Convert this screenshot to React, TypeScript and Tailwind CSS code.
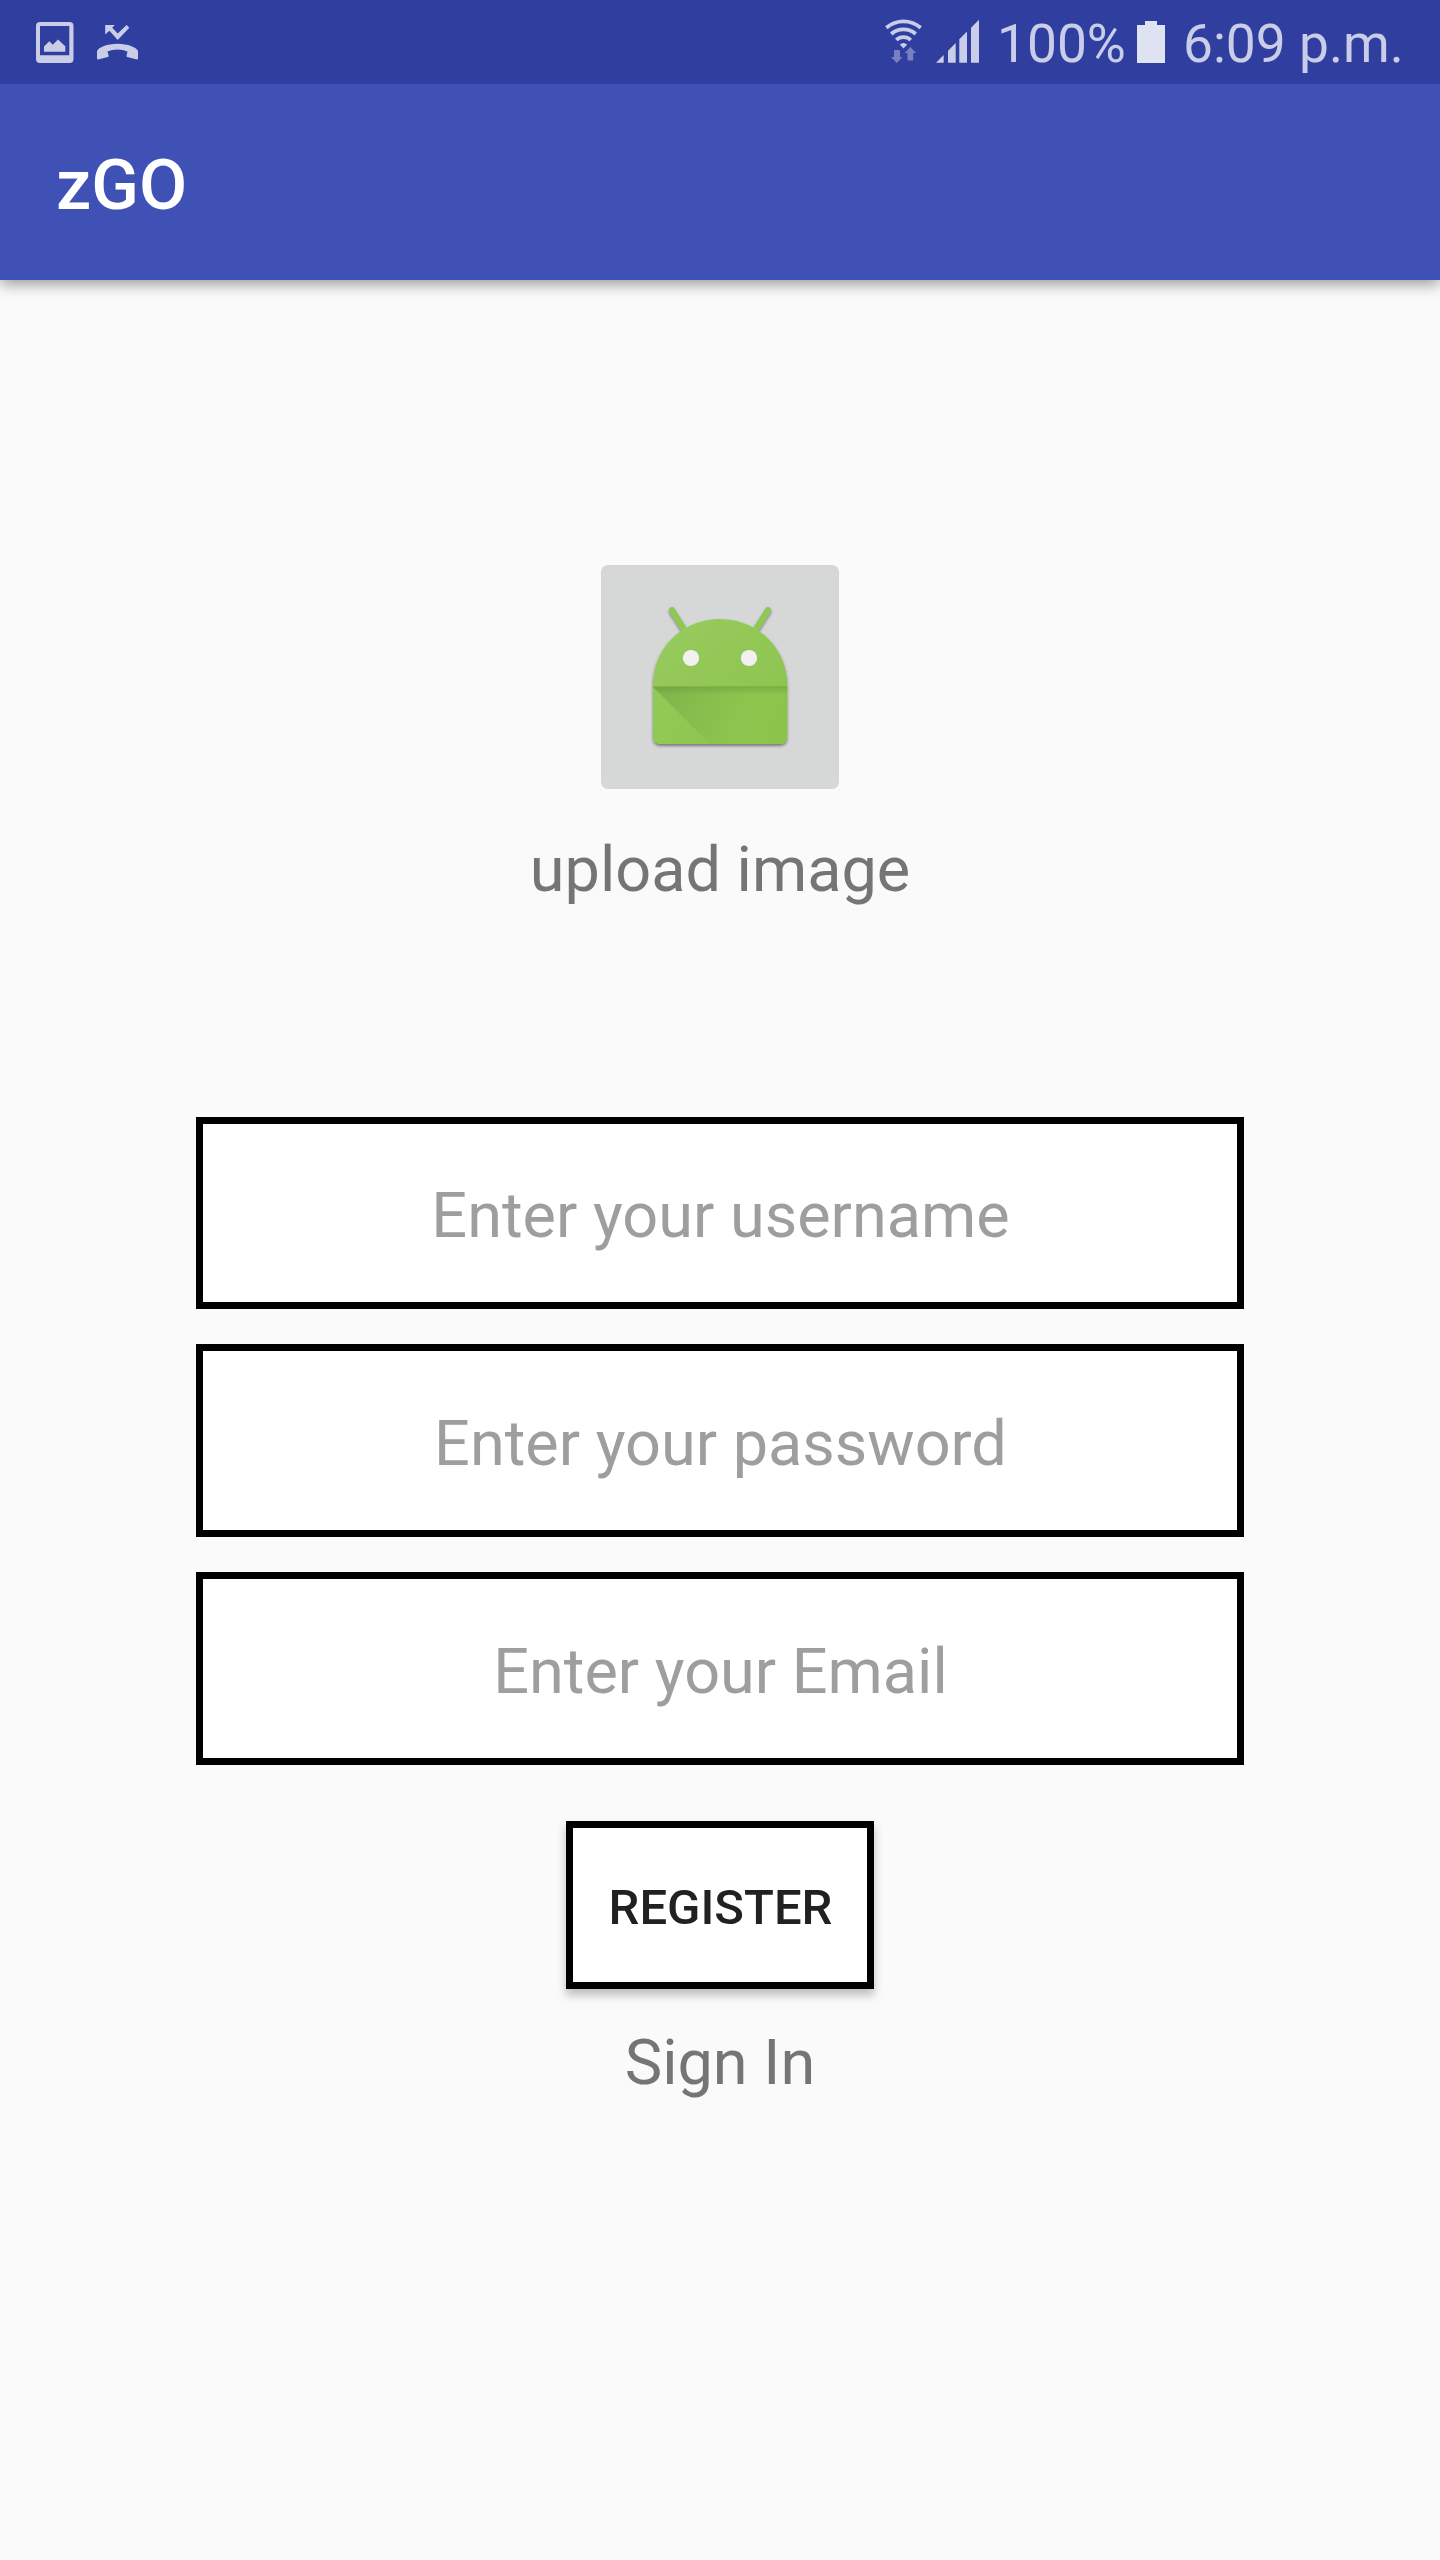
function StatusIcons() {
  return (
    <div className="flex">
      <svg className="ml-[35px] h-[84px] w-[40px]" viewBox="35 0 40 84" fill="#c9cde7">
        <path
          fillRule="evenodd"
          d="M40 22H69.5Q73.5 22 73.5 26V59Q73.5 63 69.5 63H40Q36 63 36 59V26Q36 22 40 22ZM40 26V55.3H69.3V26Z"
        />
        <path d="M44 51.8V46.5L49.3 41.2L52.8 44.8L58 39.4L65.3 46.2V51.8Z" />
      </svg>
      <svg className="ml-[20px] h-[84px] w-[45px]" viewBox="95 0 45 84" fill="#c9cde7">
        <path d="M105.2 25H114.8L112.2 27.8L117.7 33.4L126.6 25L129.3 27.8L117.7 40L109.4 30.7L105.2 34.5Z" />
        <path d="M97 51C98.5 47.5 107 43.8 117.5 43.8S136.5 47.5 138 51V58.6Q138 59.6 137 59.4L127.2 57Q126.3 56.7 126.5 55.7L127.5 51.4Q123 49.6 117.5 49.6T107.5 51.4L108.7 55.7Q109 56.7 108 57L98 59.4Q97 59.6 97 58.6Z" />
      </svg>
    </div>
  );
}

function ConnectionIcons() {
  return (
    <svg className="h-[84px] w-[98px]" viewBox="884 0 98 84">
      <g fill="none" stroke="#c9cde7" strokeWidth="3.8">
        <path d="M886.3 27.7Q894 21.3 903.5 21.3T920.7 27.7" />
        <path d="M891.3 34Q896.5 29.4 903.5 29.4T915.7 34" />
        <path d="M896.3 40Q899.3 37.1 903.5 37.1T910.7 40" />
      </g>
      <path d="M899.8 44.6Q903.5 41.3 907.2 44.6L903.5 48.6Z" fill="#c9cde7" />
      <g fill="#7880c1">
        <path d="M894 50H900V57H902.5L896.8 63L891 57H894Z" />
        <path d="M907.5 60.5V53H904.5L910.3 47L916.2 53H913.2V60.5Z" />
      </g>
      <g fill="#c9cde7">
        <path d="M936 62.7L943.7 55V62.7Z" />
        <path d="M948 62.7V50.7L955.7 43V62.7Z" />
        <path d="M959.3 62.7V39.3L967 31.5V62.7Z" />
        <path d="M971 62.7V27.7L979 19.7V62.7Z" />
      </g>
    </svg>
  );
}

function AndroidIcon() {
  return (
    <svg className="h-[224px] w-[238px]" viewBox="0 0 238 224">
      <defs>
        <linearGradient id="head" x1="0" y1="0" x2="1" y2="1">
          <stop offset="0" stopColor="#98cb60" />
          <stop offset="1" stopColor="#8bc34a" />
        </linearGradient>
        <linearGradient id="body" x1="52" y1="122" x2="186" y2="179" gradientUnits="userSpaceOnUse">
          <stop offset="0" stopColor="#93c956" />
          <stop offset="1" stopColor="#8bc34a" />
        </linearGradient>
        <linearGradient id="fold" x1="60" y1="122" x2="140" y2="155" gradientUnits="userSpaceOnUse">
          <stop offset="0" stopColor="#33691e" stopOpacity="0.2" />
          <stop offset="1" stopColor="#33691e" stopOpacity="0" />
        </linearGradient>
        <linearGradient id="crease" x1="0" y1="0" x2="0" y2="1">
          <stop offset="0" stopColor="#33691e" stopOpacity="0.2" />
          <stop offset="1" stopColor="#33691e" stopOpacity="0" />
        </linearGradient>
        <filter id="shade" x="-20%" y="-20%" width="140%" height="140%">
          <feDropShadow dx="0" dy="2" stdDeviation="1.8" floodColor="#000" floodOpacity="0.45" />
        </filter>
      </defs>
      <g filter="url(#shade)">
        <path d="M71 45L85 67M167 45L153 67" stroke="#8fc752" strokeWidth="6" strokeLinecap="round" />
        <path d="M52 122V118C53 81 83 54 119 54S185 81 186.2 118V171Q186.2 179 178.2 179H60Q52 179 52 171Z" fill="url(#head)" />
      </g>
      <path d="M52 122H186.2V171Q186.2 179 178.2 179H60Q52 179 52 171Z" fill="url(#body)" />
      <path d="M52 122L109 179H186V122Z" fill="url(#fold)" />
      <path d="M52 122H186.2V130H60Z" fill="url(#crease)" />
      <path d="M52 121.8H186.2" stroke="#7aad45" strokeWidth="1" />
      <circle cx="90" cy="93" r="8.1" fill="#f1f1f1" />
      <circle cx="148" cy="93" r="8.1" fill="#f1f1f1" />
    </svg>
  );
}

function Field({ label, size = "h-[193px] pt-[5px]" }: { label: string; size?: string }) {
  return (
    <input
      aria-label={label}
      placeholder={label}
      className={`block ${size} w-[1048px] rounded-none border-[7px] border-black bg-white pr-0 pl-[1px] text-center text-[63px] leading-[74px] text-black outline-none placeholder:text-[#9e9e9e] placeholder:opacity-100`}
    />
  );
}

export default function App() {
  return (
    <div className="flex h-[2560px] w-[1440px] flex-col bg-[#fafafa] font-[Roboto,sans-serif]">
      <header className="shadow-[0_4px_14px_rgba(0,0,0,0.4)]">
        <div className="flex h-[84px] justify-between bg-[#303f9f]">
          <StatusIcons />
          <div className="flex text-[53.3px] leading-[89px] text-[#c9cde7]">
            <ConnectionIcons />
            <span className="ml-[15px] w-[127px] whitespace-nowrap">100%</span>
            <svg className="ml-[12px] h-[84px] w-[29px]" viewBox="1136 0 29 84">
              <path d="M1137 25H1145V21H1157V25H1165V63H1137Z" fill="#dfe2f1" />
            </svg>
            <span className="ml-[18px] w-[257px] whitespace-nowrap">6:09 p.m.</span>
          </div>
        </div>
        <div className="flex h-[196px] items-center bg-[#3f51b5] pt-[6px] pl-[56px]">
          <h1 className="text-[70px] leading-[82px] font-medium text-white">zGO</h1>
        </div>
      </header>
      <main className="flex flex-col items-center pt-[285px]">
        <button aria-label="Choose image" className="rounded-[7px] bg-[#d6d8d7]">
          <AndroidIcon />
        </button>
        <p className="mt-[44px] text-[63px] leading-[74px] text-[#757575]">upload image</p>
        <form className="mt-[210px] flex flex-col items-center gap-[35px]">
          <Field label="Enter your username" size="h-[192px] pt-[4px]" />
          <Field label="Enter your password" />
          <Field label="Enter your Email" />
          <button type="button" className="mt-[21px] h-[168px] w-[308px] border-[7px] border-black bg-white pt-[6px] pl-[1px] text-[49px] leading-[58px] font-medium text-[#212121] shadow-[0_6px_9px_rgba(0,0,0,0.25)]">
            REGISTER
          </button>
        </form>
        <a className="mt-[37px] text-[63px] leading-[74px] text-[#757575]">Sign In</a>
      </main>
    </div>
  );
}
